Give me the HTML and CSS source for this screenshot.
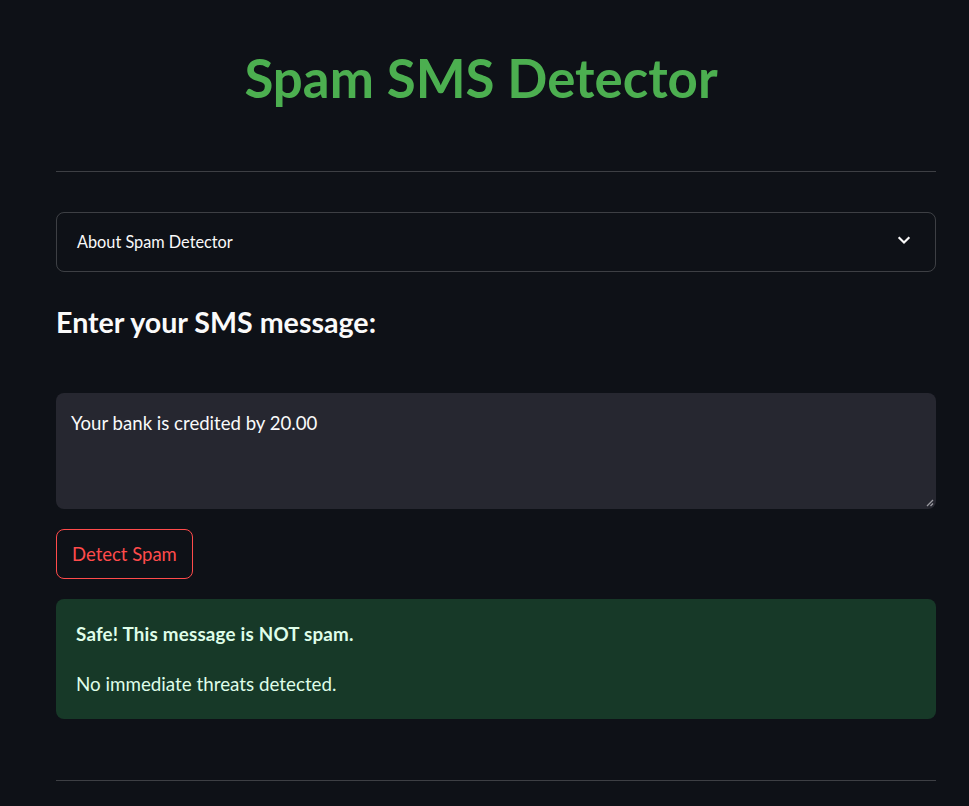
FILE: index.html
```html
<!DOCTYPE html>
<html>
<head>
<meta charset="utf-8">
<link rel="stylesheet" href="styles.css">
</head>
<body>
<main class="main">
  <h1 class="title">Spam SMS Detector</h1>
  <hr class="divider">
  <details class="expander">
    <summary class="expander-head">
      <span>About Spam Detector</span>
      <svg class="chev" width="20" height="20" viewBox="0 0 24 24"><path d="M6.5 9.5l5.5 5.5 5.5-5.5" fill="none" stroke="#fafafa" stroke-width="2.6" stroke-linecap="square"/></svg>
    </summary>
  </details>
  <h3 class="subhead">Enter your SMS message:</h3>
  <div class="textarea">
    <div class="textarea-text">Your bank is credited by 20.00</div>
    <svg class="grip" width="9" height="9" viewBox="0 0 9 9"><path d="M8 2L2 8M8 5.5L5.5 8" stroke="#9a9aa0" stroke-width="1.3"/></svg>
  </div>
  <div class="btn-row"><button class="btn">Detect Spam</button></div>
  <div class="alert">
    <p class="alert-strong">Safe! This message is NOT spam.</p>
    <p class="alert-text">No immediate threats detected.</p>
  </div>
  <hr class="divider bottom">
</main>
</body>
</html>
```

FILE: styles.css
```css
html, body {
  margin: 0;
  padding: 0;
  background: #0e1117;
  color: #fafafa;
  font-family: Lato, "Noto Sans", sans-serif;
}
.main {
  padding: 0 33px 0 56px;
  display: flex;
  flex-direction: column;
}
.title {
  margin: 48px 0 0 0;
  padding-right: 30px;
  text-align: center;
  color: #4caf50;
  font-size: 52.8px;
  font-weight: 700;
  line-height: 60px;
}
.divider {
  border: none;
  border-top: 1px solid rgba(250,250,250,0.2);
  margin: 63px 0 0 0;
  height: 0;
}
.expander {
  margin-top: 40px;
  border: 1px solid rgba(250,250,250,0.2);
  border-radius: 8px;
  height: 60px;
  box-sizing: border-box;
}
.expander-head {
  list-style: none;
  display: flex;
  align-items: center;
  justify-content: space-between;
  height: 57px;
  padding: 0 21px 0 20px;
  font-size: 16.3px;
  cursor: pointer;
}
.expander-head::-webkit-details-marker { display: none; }
.chev { display: block; margin-top: -3px; }
.subhead {
  margin: 32px 0 0 0;
  font-size: 28.6px;
  font-weight: 700;
  line-height: 36px;
}
.textarea {
  position: relative;
  margin-top: 53px;
  height: 116px;
  background: #262730;
  border-radius: 8px;
  padding: 19px 15px 18px;
  box-sizing: border-box;
  font-size: 18.6px;
}
.grip { position: absolute; right: 2px; bottom: 2px; }
.btn-row { display: flex; margin-top: 20px; }
.btn {
  background: #0e1117;
  border: 1px solid #ff4b4b;
  color: #ff4b4b;
  border-radius: 8px;
  height: 50px;
  padding: 0 15px;
  font-family: inherit;
  font-size: 18.5px;
}
.alert {
  margin-top: 20px;
  background: #173928;
  color: #dffde9;
  border-radius: 8px;
  padding: 23px 20px 23px;
  font-size: 18.8px;
}
.alert p { margin: 0; line-height: 24px; }
.alert-strong { font-weight: 700; letter-spacing: 0.2px; }
.alert-text { margin-top: 26px !important; }
.bottom { margin-top: 61px; }
```
